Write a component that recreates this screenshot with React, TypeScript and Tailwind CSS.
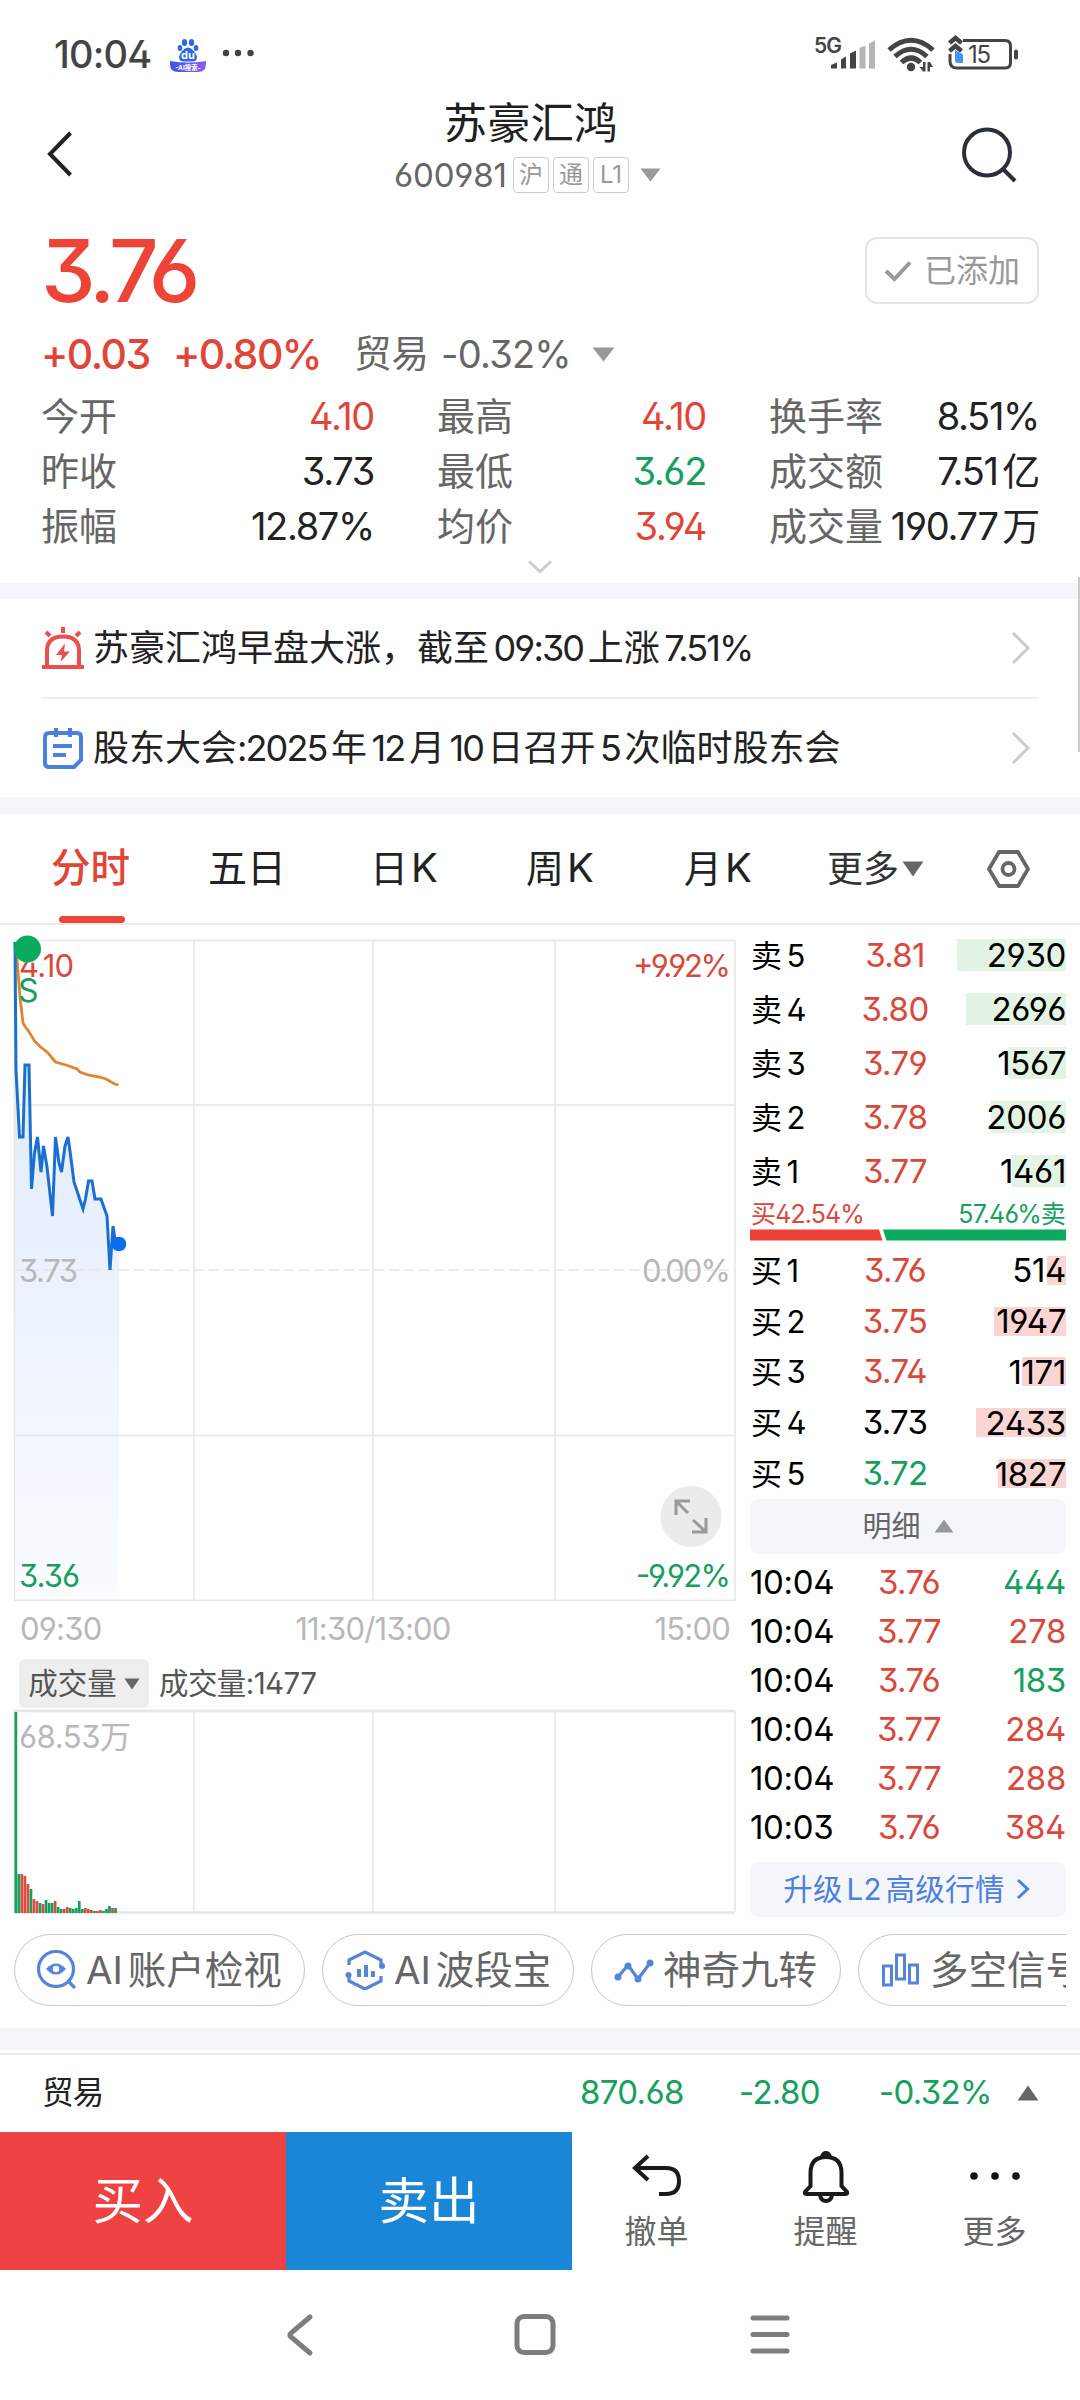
import React from 'react';

interface Level {
  name: string;
  price: string;
  qty: number;
  color: string;
}

interface Tick {
  time: string;
  price: string;
  qty: number;
  up: boolean;
}

const sells: Level[] = [
  { name: '卖5', price: '3.81', qty: 2930, color: 'text-[#d9483b]' },
  { name: '卖4', price: '3.80', qty: 2696, color: 'text-[#d9483b]' },
  { name: '卖3', price: '3.79', qty: 1567, color: 'text-[#d9483b]' },
  { name: '卖2', price: '3.78', qty: 2006, color: 'text-[#d9483b]' },
  { name: '卖1', price: '3.77', qty: 1461, color: 'text-[#d9483b]' },
];

const buys: Level[] = [
  { name: '买1', price: '3.76', qty: 514, color: 'text-[#d9483b]' },
  { name: '买2', price: '3.75', qty: 1947, color: 'text-[#d9483b]' },
  { name: '买3', price: '3.74', qty: 1171, color: 'text-[#d9483b]' },
  { name: '买4', price: '3.73', qty: 2433, color: 'text-black' },
  { name: '买5', price: '3.72', qty: 1827, color: 'text-[#16a05c]' },
];

const ticks: Tick[] = [
  { time: '10:04', price: '3.76', qty: 444, up: false },
  { time: '10:04', price: '3.77', qty: 278, up: true },
  { time: '10:04', price: '3.76', qty: 183, up: false },
  { time: '10:04', price: '3.77', qty: 284, up: true },
  { time: '10:04', price: '3.77', qty: 288, up: true },
  { time: '10:03', price: '3.76', qty: 384, up: true },
];

const stats = [
  [
    { label: '今开', value: '4.10', color: 'text-[#e04638]' },
    { label: '最高', value: '4.10', color: 'text-[#e04638]' },
    { label: '换手率', value: '8.51%', color: 'text-[#222]' },
  ],
  [
    { label: '昨收', value: '3.73', color: 'text-[#222]' },
    { label: '最低', value: '3.62', color: 'text-[#16a05c]' },
    { label: '成交额', value: '7.51亿', color: 'text-[#222]' },
  ],
  [
    { label: '振幅', value: '12.87%', color: 'text-[#222]' },
    { label: '均价', value: '3.94', color: 'text-[#e04638]' },
    { label: '成交量', value: '190.77万', color: 'text-[#222]' },
  ],
];

// price line, in chart pixels
const pricePoints =
  '1,2 2,130 5.5,197 9,197 11,125 15,125 17.5,249 20.5,213 23.5,197 27,232 29.5,206 33,227 38.5,276 41.5,197 45,223 47.5,232 51,206 54,197 56.5,215 60,242 69,269 71.5,259 74.5,241 78,241 81,259 87,259 93,276 96,330 99,286 101.5,303 105,304';
const avgPoints =
  '2.5,13 6,57 9,83 11.5,87 14.5,91 20.5,101 25.5,106 34,113 41.5,122 52,125 63,129 66,132 74,135 85.5,137 92,139 100.5,144 104.5,145';

// [height, is up]
const volumes: [number, boolean][] = [
  [201, false], [39, false], [39, true], [37, true], [29, true], [24, false], [14, true], [12, true],
  [10, false], [9, true], [13, false], [10, false], [10, false], [12, true], [6, false], [4, false],
  [4, true], [6, true], [5, false], [4, false], [5, false], [12, false], [4, false], [5, true],
  [4, true], [3, true], [2, false], [2, true], [3, true], [2, false], [4, false], [7, false],
  [5, true], [5, false],
];

const Triangle = ({ className, up = false }: { className: string; up?: boolean }) => (
  <svg viewBox="0 0 20 13" preserveAspectRatio="none" className={className} fill="currentColor">
    <path d={up ? 'M10 0.5 L19.5 12.5 H0.5Z' : 'M0.5 0.5 H19.5 L10 12.5Z'} />
  </svg>
);

const Chevron = ({ className }: { className: string }) => (
  <svg viewBox="0 0 20 34" className={className} fill="none" stroke="currentColor" strokeWidth="3">
    <path d="M2 2 L17 17 L2 32" />
  </svg>
);

const StatusBar = () => (
  <div className="flex h-[90px] items-start text-[#444]">
    <div className="ml-[54px] mt-[33px] w-[116px] text-[38px] font-medium leading-[42px] tracking-[-0.02em]">10:04</div>
    <svg className="mt-9 h-9 w-9" viewBox="0 0 36 36">
      <defs>
        <linearGradient id="du" x1="0" y1="0" x2="1" y2="0">
          <stop offset="0" stopColor="#3f55e8" />
          <stop offset="1" stopColor="#8a5cf5" />
        </linearGradient>
      </defs>
      <path d="M0 25 Q18 28 36 25 V28 Q36 36 28 36 H8 Q0 36 0 28Z" fill="url(#du)" />
      <g fill="#2a68e0">
        <ellipse cx="14.5" cy="6.5" rx="2.7" ry="3.6" />
        <ellipse cx="21.5" cy="6.5" rx="2.7" ry="3.6" />
        <ellipse cx="10" cy="12" rx="2.3" ry="3" />
        <ellipse cx="26" cy="12" rx="2.3" ry="3" />
        <path d="M18 11.500 C23 12 26 18 27 21 Q27 25.500 22 25.500 H14 Q9 25.500 9 21 C10 18 13 12 18 11.500Z" />
      </g>
      <text x="18" y="23" fontSize="11" fontWeight="700" fill="#fff" textAnchor="middle">du</text>
      <text x="18" y="33.500" fontSize="6.500" fontWeight="700" fill="#fff" textAnchor="middle">-AI搜索-</text>
    </svg>
    <svg className="ml-4 mt-[49px] h-2 w-9" viewBox="0 0 36 8" fill="#444">
      <circle cx="4" cy="4" r="3.200" />
      <circle cx="16" cy="4" r="3.200" />
      <circle cx="28.500" cy="4" r="3.200" />
    </svg>
    <svg className="ml-auto mr-[56px] mt-[34px] h-10 w-[210px]" viewBox="0 0 210 40">
      <text x="0" y="18.500" fontSize="21" fontWeight="600" fill="#444" textLength="28">5G</text>
      <g fill="#444">
        <path d="M17 31 L23 28.500 V34.500 H17Z" />
        <path d="M27 25.500 L32 22.500 V34.500 H27Z" />
        <path d="M36 19.500 L42 16.500 V34.500 H36Z" />
      </g>
      <g fill="#b5b5b5">
        <path d="M45.500 14 L51.500 11.500 V34.500 H45.500Z" />
        <path d="M55 9.500 L61 6.500 V34.500 H55Z" />
      </g>
      <g fill="none" stroke="#444" strokeWidth="5">
        <path d="M75 16 Q97 -3.500 119 16" />
        <path d="M81 22.500 Q97 8 113 22.500" />
        <path d="M87.500 28.500 Q97 19.500 106.500 28.500" />
      </g>
      <circle cx="97" cy="33" r="4.200" fill="#444" />
      <g fill="#444">
        <path d="M109 28 H111.500 V37.500 H109 L105.500 33 H109Z" />
        <path d="M113.500 28 H116 L119 33 H116 V37.500 H113.500Z" />
      </g>
      <path d="M149 6.500 H191 Q196.500 6.500 196.500 12 V28.500 Q196.500 34 191 34 H143 Q136 34 136 27 V20" fill="none" stroke="#444" strokeWidth="3" />
      <rect x="200" y="15.500" width="4" height="10" rx="2" fill="#444" />
      <path d="M141 16 L149 20.500 V29 H144 Q141 29 141 26Z" fill="#3f95f5" />
      <path d="M135.500 9 L141.500 4 L147.500 9 M135.500 17 L141.500 12 L147.500 17" fill="none" stroke="#444" strokeWidth="4.500" />
      <text x="154" y="29" fontSize="24" fill="#444" textLength="23">15</text>
    </svg>
  </div>
);

const Header = () => (
  <div className="flex h-[124px] justify-between">
    <svg className="ml-11 mt-10 h-12 w-[52px]" viewBox="0 0 52 48" fill="none" stroke="#222" strokeWidth="4">
      <path d="M26.500 3 L6 24 L26.500 45" />
    </svg>
    <div className="flex flex-col items-center">
      <div className="mt-2 h-[52px] pl-[6px] text-[43.500px] leading-[50px] text-[#1f1f1f]">苏豪汇鸿</div>
      <div className="mt-[7px] flex h-9 items-center gap-1">
        <span className="w-[115px] text-[33px] leading-9 tracking-[-0.005em] text-[#666]">600981</span>
        {['沪', '通', 'L1'].map((tag) => (
          <span
            key={tag}
            className="flex h-9 w-9 items-center justify-center rounded border-[1.500px] border-[#ccc] text-[24px] leading-none text-[#999]"
          >
            {tag}
          </span>
        ))}
        <Triangle className="ml-[7px] h-[14px] w-[21px] text-[#999]" />
      </div>
    </div>
    <svg className="mr-[63px] mt-[35px] h-[58px] w-[58px]" viewBox="0 0 58 58" fill="none" stroke="#2b2f3a" strokeWidth="4">
      <circle cx="28" cy="27.500" r="23" />
      <path d="M43 43 L56 56" />
    </svg>
  </div>
);

const Quote = () => (
  <div className="px-[41px]">
    <div className="flex h-[111px] justify-between">
      <div className="mt-[12px] text-[87px] font-[480] leading-[90px] tracking-[-0.055em] text-[#ee4438]">3.76</div>
      <div className="mt-[23px] flex h-[67px] w-[174px] items-center justify-center gap-3 rounded-xl border-2 border-[#e4e4e4] text-[32px] text-[#999]">
        <svg className="h-6 w-7" viewBox="0 0 28 24" fill="none" stroke="#999" strokeWidth="4">
          <path d="M2 12 L10.500 20 L26 3.500" />
        </svg>
        已添加
      </div>
    </div>
    <div className="flex h-[58px] items-center text-[#666]">
      <span className="w-[132px] text-[41px] font-[450] tracking-[-0.037em] text-[#e04638]">+0.03</span>
      <span className="w-[181px] text-[41px] font-[450] tracking-[-0.037em] text-[#e04638]">+0.80%</span>
      <span className="w-[87px] text-[37.500px]">贸易</span>
      <span className="w-[130px] text-[38px] tracking-[-0.02em]">-0.32%</span>
      <Triangle className="ml-[21px] h-[15px] w-[23px] text-[#999]" />
    </div>
    <div className="mt-[6px]">
      {stats.map((row, i) => (
        <div key={i} className="grid h-[55px] grid-cols-[333px_269px_270px] items-center justify-start gap-x-[63px] text-[38px] whitespace-nowrap">
          {row.map((cell) => (
            <div key={cell.label} className="flex justify-between leading-[55px]">
              <span className="text-[#666]">{cell.label}</span>
              <span className={`tracking-[-0.035em] [text-autospace:normal] ${cell.color}`}>{cell.value}</span>
            </div>
          ))}
        </div>
      ))}
    </div>
    <div className="flex h-[29px] items-center justify-center">
      <svg className="mb-[3px] h-[14px] w-[26px]" viewBox="0 0 26 14" fill="none" stroke="#ccc" strokeWidth="3">
        <path d="M2 1.500 L13 11.500 L24 1.500" />
      </svg>
    </div>
  </div>
);

// tightens the digit runs inside a Chinese sentence
const MixedText = ({ text }: { text: string }) => (
  <span className="flex-1 [text-autospace:normal]">
    {text.split(/([\d:.%]+)/).map((part, i) =>
      i % 2 ? (
        <span key={i} className="tracking-[-0.052em]">{part}</span>
      ) : (
        part
      )
    )}
  </span>
);

const News = () => (
  <div className="px-[41px] text-[36px] text-[#222]">
    <div className="flex h-[100px] items-center border-b-2 border-[#efefef]">
      <svg className="mr-[9px] h-11 w-[43px]" viewBox="0 0 43 44" fill="none" stroke="#e9504d" strokeWidth="4">
        <path d="M6 41 V25 Q6 10.500 22 10.500 Q38 10.500 38 25 V41" />
        <path d="M1 41 H43 M22 1 V7 M5 6 L9 10 M39 6 L35 10" />
        <path d="M24 17.500 L15 29 H21 L19.500 36 L29 25.500 H23Z" fill="#e9504d" stroke="none" />
      </svg>
      <MixedText text="苏豪汇鸿早盘大涨，截至09:30上涨7.51%" />
      <Chevron className="mr-[8px] h-[34px] w-5 text-[#ccc]" />
    </div>
    <div className="flex h-[98px] items-center">
      <svg className="mr-[9px] h-11 w-[43px]" viewBox="0 0 43 44" fill="none" stroke="#4b7fe0" strokeWidth="4">
        <path d="M8 7 H36 Q40 7 40 11 V34 L33 41 H8 Q4 41 4 37 V11 Q4 7 8 7Z" />
        <path d="M15 2 V11 M29 2 V11 M12 20 H31 M12 29 H25" />
      </svg>
      <MixedText text="股东大会:2025年12月10日召开5次临时股东会" />
      <Chevron className="mr-[8px] h-[34px] w-5 text-[#ccc]" />
    </div>
  </div>
);

const Tabs = () => (
  <div className="flex h-[111px] border-b-2 border-[#ebebeb] text-[38px] leading-[108px] text-[#222]">
    <div className="relative ml-[51px] w-[157px] text-[39.500px] font-medium text-[#e04638]">
      分时
      <span className="absolute bottom-0 left-[8px] h-[7px] w-[66px] rounded bg-[#ee4438]" />
    </div>
    <div className="w-[162px] text-[39px]">五日</div>
    <div className="w-[156px] tracking-[0.08em]">日<span className="text-[40px]">K</span></div>
    <div className="w-[158px] tracking-[0.08em]">周<span className="text-[40px]">K</span></div>
    <div className="w-[143px] tracking-[0.08em]">月<span className="text-[40px]">K</span></div>
    <div className="flex w-[160px] items-center gap-[3px] text-[36px] text-[#333]">
      更多
      <Triangle className="h-4 w-[22px] text-[#666]" />
    </div>
    <svg className="mt-[36px] h-[38px] w-[43px]" viewBox="0 0 43 38" fill="none" stroke="#666" strokeWidth="3.800">
      <path d="M12 2 H31 L41 19 L31 36 H12 L2 19Z" strokeLinejoin="round" />
      <circle cx="21.500" cy="19" r="6" />
    </svg>
  </div>
);

const PriceChart = () => (
  <div className="relative h-[670px]">
    <svg className="absolute top-0 left-0 overflow-visible" width="722" height="670" fontSize="31">
      <defs>
        <linearGradient id="area" x1="0" y1="0" x2="0" y2="1">
          <stop offset="0" stopColor="#d9e7fb" />
          <stop offset="0.500" stopColor="#ebf2fe" />
          <stop offset="1" stopColor="#fafcff" />
        </linearGradient>
      </defs>
      <polygon points={`${pricePoints} 105,661 1,661`} fill="url(#area)" />
      <g stroke="#e6e6e6" strokeWidth="1.500" fill="none">
        <rect x="0.500" y="0.500" width="720.500" height="660" />
        <path d="M180 1 V661 M359 1 V661 M541 1 V661 M0 165 H721 M0 495.500 H721" />
        <path d="M0 330 H721" strokeDasharray="10 5" />
      </g>
      <polyline points={avgPoints} fill="none" stroke="#e0852b" strokeWidth="2.800" />
      <polyline points={pricePoints} fill="none" stroke="#1a6fd0" strokeWidth="3" />
      <circle cx="105" cy="304" r="7.300" fill="#0b6fec" />
      <text x="5" y="37" fill="#d9483b" textLength="55">4.10</text>
      <circle cx="13.500" cy="9" r="13.500" fill="#0aab5c" />
      <text x="4" y="62" fontSize="32" fill="#16a05c">S</text>
      <text x="619" y="37" fill="#d9483b" textLength="98">+9.92%</text>
      <text x="5" y="342" fill="#b8b8b8" textLength="59">3.73</text>
      <text x="628" y="342" fill="#b8b8b8" textLength="89">0.00%</text>
      <text x="5" y="647" fill="#16a05c" textLength="61">3.36</text>
      <text x="622" y="647" fill="#16a05c" textLength="95">-9.92%</text>
      <circle cx="677" cy="576.500" r="30.500" fill="#ebebeb" />
      <g fill="none" stroke="#999" strokeWidth="3">
        <path d="M674 573 L662 561 M662 575 V561 H676" />
        <path d="M679 580 L692 592 M692 578 V592 H678" />
      </g>
    </svg>
  </div>
);

const VolumeChart = () => (
  <svg className="block overflow-visible" width="722" height="205" fontSize="31">
    <g stroke="#e6e6e6" strokeWidth="1.500" fill="none">
      <path d="M0 1 H721 M0 202.500 H721" strokeWidth="2.500" />
      <path d="M0.500 1 V202 M180 1 V202 M359 1 V202 M541 1 V202 M721 1 V202" />
    </g>
    {volumes.map(([h, up], i) => (
      <rect key={i} x={0.5 + i * 3.02} y={203 - h} width="2.700" height={h} fill={up ? '#dd4b41' : '#14a05a'} />
    ))}
    <text x="5" y="38" fill="#b8b8b8" textLength="112">68.53万</text>
  </svg>
);

const BookRow = ({ level, sell }: { level: Level; sell?: boolean }) => (
  <div className={`flex items-center text-[33px] text-black ${sell ? 'h-[54px]' : 'h-[50.800px]'}`}>
    <span className="w-[60px] pl-px text-[31px] tracking-[0.02em] whitespace-nowrap [text-autospace:normal]">{level.name}</span>
    <span className={`w-[170px] text-center tracking-[-0.02em] ${level.color}`}>{level.price}</span>
    <span className="relative flex flex-1 items-center justify-end leading-8 tracking-[-0.01em]">
      <span
        className={`absolute right-0 ${sell ? 'h-8 bg-[#e3f3e4]' : 'h-[29px] bg-[#f9d5d3]'}`}
        style={{ width: level.qty * 0.0372 }}
      />
      <span className="relative">{level.qty}</span>
    </span>
  </div>
);

const OrderBook = () => (
  <div className="w-[316px]">
    <div className="pt-[3px]">
      {sells.map((level) => (
        <BookRow key={level.name} level={level} sell />
      ))}
    </div>
    <div className="mt-[2px] flex h-[28px] items-center justify-between px-px text-[25px] leading-7 tracking-[-0.035em]">
      <span className="text-[#d9483b]">买42.54%</span>
      <span className="text-[#16a05c]">57.46%卖</span>
    </div>
    <svg className="mt-[1px] block" width="316" height="12">
      <path d="M0 0.500 H129 L132.500 11.500 H0Z" fill="#ee4035" />
      <path d="M133 0.500 H316 V11.500 H136.500Z" fill="#0aab5c" />
    </svg>
    <div className="pt-[4px]">
      {buys.map((level) => (
        <BookRow key={level.name} level={level} />
      ))}
    </div>
    <div className="flex h-[55px] items-center justify-center gap-[13px] rounded-lg bg-[#f5f6f9] text-[29px] text-[#666]">
      明细
      <Triangle up className="h-[14px] w-5 text-[#999]" />
    </div>
    <div className="pt-[4px]">
      {ticks.map((tick, i) => (
        <div key={i} className="flex h-[49px] items-center text-[33px] tracking-[-0.01em]">
          <span className="w-[104px] text-black">{tick.time}</span>
          <span className="w-[110px] text-center tracking-[-0.02em] text-[#d9483b]">{tick.price}</span>
          <span className={`flex-1 text-right ${tick.up ? 'text-[#d9483b]' : 'text-[#16a05c]'}`}>{tick.qty}</span>
        </div>
      ))}
    </div>
    <div className="mt-[10px] flex h-[55px] items-center justify-center gap-[11px] rounded-lg bg-[#f5f6f9] pr-[3px] text-[29.500px] tracking-[0.01em] text-[#4b7fe0] [text-autospace:normal]">
      升级L2高级行情
      <svg viewBox="0 0 14 22" className="h-[22px] w-[14px]" fill="none" stroke="currentColor" strokeWidth="3">
        <path d="M2 2 L11.500 11 L2 20" />
      </svg>
    </div>
  </div>
);

const tools = [
  {
    name: 'AI账户检视',
    width: 'w-[291px] pl-[22px]',
    icon: (
      <>
        <circle cx="19" cy="19" r="17.500" />
        <path d="M31 31 L38 38" />
        <path d="M9 19 Q19 8 29 19 Q19 30 9 19Z" fill="#5585d8" stroke="none" />
        <circle cx="19" cy="19" r="3.200" fill="#fff" stroke="none" />
      </>
    ),
  },
  {
    name: 'AI波段宝',
    width: 'w-[252px] pl-[22px]',
    icon: (
      <>
        <path d="M4 15 V10 L20 2 L36 10 V15 M4 26 V31 L20 39 L36 31 V26" />
        <circle cx="37" cy="16" r="3" fill="#5585d8" stroke="none" />
        <circle cx="3.500" cy="25" r="3" fill="#5585d8" stroke="none" />
        <path d="M14 19 V27 M21 15 V27 M28 21 V27" strokeWidth="4" />
      </>
    ),
  },
  {
    name: '神奇九转',
    width: 'w-[250px] pl-[22px]',
    icon: (
      <>
        <path d="M4 27 L14 15 L24 29 L36 13" />
        <g fill="#5585d8" stroke="none">
          <circle cx="4" cy="27" r="3.500" />
          <circle cx="14" cy="16" r="3.500" />
          <circle cx="24" cy="29" r="3.500" />
          <circle cx="36" cy="13" r="3.500" />
        </g>
      </>
    ),
  },
  {
    name: '多空信号',
    width: 'w-[260px] pl-[22px]',
    icon: (
      <path d="M2.500 16 H10.500 V35 H2.500Z M15.500 5 H23.500 V29 H15.500Z M28.500 15 H36.500 V33 H28.500Z" strokeWidth="3" />
    ),
  },
];

const ToolBar = () => (
  <div className="ml-[14px] mr-[14px] flex gap-[17px] overflow-hidden">
    {tools.map((tool) => (
      <div
        key={tool.name}
        className={`flex h-[72px] shrink-0 items-center gap-[9px] rounded-full border border-[#c8c8c8] text-[38.500px] whitespace-nowrap text-[#666] [text-autospace:normal] ${tool.width}`}
      >
        <svg className="h-10 w-10 shrink-0" viewBox="0 0 40 40" fill="none" stroke="#5585d8" strokeWidth="3.200">
          {tool.icon}
        </svg>
        {tool.name}
      </div>
    ))}
  </div>
);

const actions = [
  {
    name: '撤单',
    icon: <path d="M16 6 L3 18 L16 30 M3 18 H34 Q47 18 47 31 Q47 44 34 44 H27" transform="translate(0 -1)" />,
  },
  {
    name: '提醒',
    icon: (
      <>
        <path d="M21 6 Q22 2 25 2 Q28 2 29 6" />
        <path d="M9.500 35 V22 Q9.500 6 25 6 Q40.500 6 40.500 22 V35 L46 41 Q47 43 44 43 H6 Q3 43 4 41Z" />
        <path d="M19 44 Q20 50 25 50 Q30 50 31 44" />
      </>
    ),
  },
  {
    name: '更多',
    icon: (
      <g fill="#111" stroke="none">
        <circle cx="4" cy="25" r="3.800" />
        <circle cx="25" cy="25" r="3.800" />
        <circle cx="46" cy="25" r="3.800" />
      </g>
    ),
  },
];

const BottomBar = () => (
  <div className="flex h-[138px]">
    <div className="w-[286px] bg-[#ef4343] text-center text-[50.500px] leading-[138px] text-white">买入</div>
    <div className="w-[286px] bg-[#1986d8] text-center text-[50.500px] leading-[138px] text-white">卖出</div>
    <div className="flex flex-1 pr-px">
      {actions.map((action) => (
        <div key={action.name} className="flex flex-1 flex-col items-center pt-[19px]">
          <svg className="h-[52px] w-[50px] overflow-visible" viewBox="0 0 50 52" fill="none" stroke="#1a1a1a" strokeWidth="4">
            {action.icon}
          </svg>
          <span className="mt-[9px] text-[32px] leading-10 text-[#666]">{action.name}</span>
        </div>
      ))}
    </div>
  </div>
);

const NavBar = () => (
  <div className="flex h-[130px] items-center justify-center">
    <svg width="510" height="44" viewBox="0 0 510 44" fill="none" stroke="#7d7d7d" strokeWidth="5" strokeLinecap="round">
      <path d="M25 4 L6 20 Q4 22 6 24 L25 40" />
      <rect x="232" y="3.500" width="36" height="36" rx="7" />
      <path d="M468 5 H502 M468 21.500 H502 M468 38 H502" />
    </svg>
  </div>
);

const App = () => {
  return (
    <div className="relative h-[2400px] w-[1080px] overflow-hidden bg-[#fefefe] font-['Inter','Noto_Sans_CJK_SC',sans-serif] leading-none [font-feature-settings:'ss01']">
      <StatusBar />
      <Header />
      <Quote />
      <div className="h-4 bg-[#f5f6f9]" />
      <News />
      <div className="h-[17px] bg-[#f5f6f9]" />
      <Tabs />

      <div className="flex h-[1009px] justify-between pl-[14px] pr-[14px]">
        <div className="w-[722px] pt-[15px]">
          <PriceChart />
          <div className="flex h-9 items-center justify-between pr-[6px] pl-[6px] text-[31px] tracking-[-0.025em] text-[#b8b8b8]">
            <span>09:30</span>
            <span className="relative right-[5px]">11:30/13:00</span>
            <span>15:00</span>
          </div>
          <div className="mt-[13px] mb-[2px] flex h-[49px] items-center pl-[5px] text-[29.500px] text-[#555]">
            <div className="mr-[10px] flex h-[49px] w-[130px] items-center justify-center gap-[7px] rounded-md bg-[#eee]">
              成交量
              <Triangle className="h-3 w-4 text-[#666]" />
            </div>
            <span className="tracking-[-0.02em]">成交量:1477</span>
          </div>
          <VolumeChart />
        </div>
        <OrderBook />
      </div>

      <ToolBar />
      <div className="mt-[22px] h-[22px] bg-[#f5f6f9]" />
      <div className="mt-[3px] flex h-[79px] items-center border-t-2 border-[#ececec] pb-[2px] pl-[42px] text-[33px] tracking-[-0.02em] text-[#16a05c]">
        <span className="w-[538px] text-[31.500px] text-[#222]">贸易</span>
        <span className="w-[159px]">870.68</span>
        <span className="w-[140px]">-2.80</span>
        <span className="w-[138px]">-0.32%</span>
        <Triangle up className="h-4 w-[22px] text-[#666]" />
      </div>
      <BottomBar />
      <NavBar />
      <div className="absolute top-[577px] right-0 h-[175px] w-[2px] bg-[#ccc]" />
    </div>
  );
};

export default App;
